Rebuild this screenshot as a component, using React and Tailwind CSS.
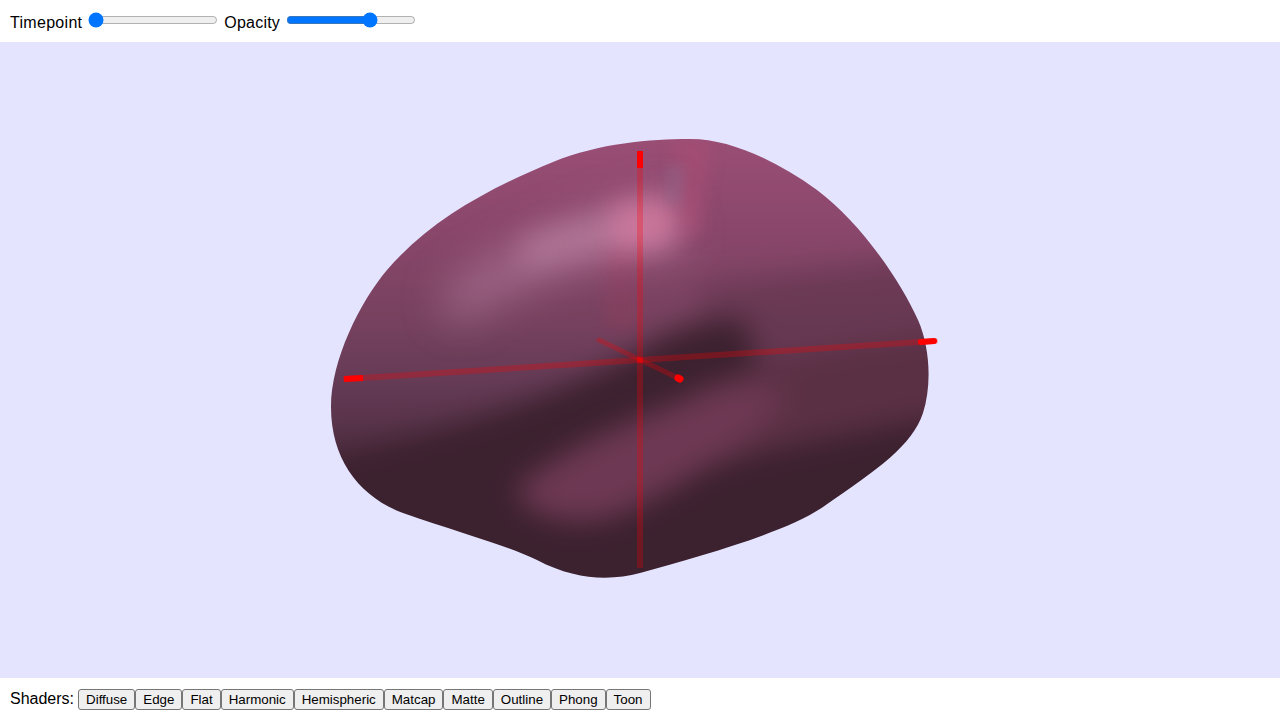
// App.jsx
import React, { useState } from "react";

const SHADERS = ["Diffuse", "Edge", "Flat", "Harmonic", "Hemispheric", "Matcap", "Matte", "Outline", "Phong", "Toon"];

// outline of the mesh, in page coordinates
const OUTLINE =
  "M690 139C730 139 775 160 817 190C860 222 900 280 918 320C930 347 932 385 923 413C912 445 880 468 823 507C785 533 700 556 640 573C610 581 575 580 537 560C500 543 460 533 403 513C360 497 331 460 331 407C331 360 360 302 387 270C430 220 490 188 553 162C600 143 650 139 690 139Z";

const Mesh = () => (
  <svg viewBox="0 42 1280 636" className="block w-full h-full">
    <defs>
      <linearGradient id="base" x1="0" y1="140" x2="0" y2="470" gradientUnits="userSpaceOnUse">
        <stop offset="0" stopColor="#9a4e75" />
        <stop offset="0.3" stopColor="#88466a" />
        <stop offset="0.55" stopColor="#76415e" />
        <stop offset="0.75" stopColor="#633a54" />
        <stop offset="1" stopColor="#4a2a3c" />
      </linearGradient>
      <clipPath id="mesh">
        <path d={OUTLINE} />
      </clipPath>
      <filter id="b6" colorInterpolationFilters="sRGB" x="-50%" y="-50%" width="200%" height="200%"><feGaussianBlur stdDeviation="6" /></filter>
      <filter id="b8" colorInterpolationFilters="sRGB" x="-50%" y="-50%" width="200%" height="200%"><feGaussianBlur stdDeviation="8" /></filter>
      <filter id="b14" colorInterpolationFilters="sRGB" x="-50%" y="-50%" width="200%" height="200%"><feGaussianBlur stdDeviation="14" /></filter>
      <filter id="b22" colorInterpolationFilters="sRGB" x="-50%" y="-50%" width="200%" height="200%"><feGaussianBlur stdDeviation="22" /></filter>
    </defs>

    <rect x="0" y="42" width="1280" height="636" fill="#e4e4ff" />

    <g clipPath="url(#mesh)">
      {/* opaque shading regions, blurred together */}
      <g filter="url(#b14)">
        <rect x="250" y="60" width="780" height="600" fill="url(#base)" />
        <path d="M700 285 L1000 245 L1000 400 L700 400Z" fill="#5f334b" opacity="0.6" />
        <path d="M250 470 C400 445 540 405 640 350 C670 328 710 316 745 320 L760 375 L1030 420 L1030 660 L250 660Z" fill="#3c212f" />
        <path d="M690 392 C770 360 860 342 1000 330 L1000 410 C880 425 790 445 690 470Z" fill="#5a3044" />
        <path d="M515 490 C565 445 650 410 745 380 L790 395 C750 445 690 480 625 512 C580 530 530 520 515 490Z" fill="#6d3853" />
      </g>
      {/* highlights */}
      <path d="M440 295 C510 240 590 212 670 195 L685 250 C600 255 520 275 455 325Z" fill="#b47e9f" opacity="0.7" filter="url(#b22)" />
      <path d="M520 240 C570 222 620 212 660 208 L670 240 C620 244 570 252 525 268Z" fill="#c58cab" opacity="0.5" filter="url(#b14)" />
      <path d="M612 205 L678 195 L678 240 L614 255Z" fill="#d8789e" opacity="0.7" filter="url(#b14)" />
      <path d="M672 140 L712 140 L700 235 L682 235Z" fill="#b04f74" opacity="0.45" filter="url(#b8)" />
      <path d="M665 165 L686 165 L680 205 L665 205Z" fill="#8c6a8e" opacity="0.4" filter="url(#b6)" />
      <path d="M605 250 L640 250 L640 330 L605 330Z" fill="#a83c5c" opacity="0.2" filter="url(#b8)" />
    </g>

    {/* axes */}
    <g stroke="#ff0000" strokeLinecap="round" fill="none">
      <path d="M640 153 L640 568" strokeWidth="6" strokeLinecap="butt" opacity="0.27" />
      <path d="M346 379 L935 341" strokeWidth="6" opacity="0.28" />
      <path d="M599 340 L680 379" strokeWidth="5" opacity="0.28" />
      <path d="M640 151 L640 168" strokeWidth="6" strokeLinecap="butt" />
      <path d="M344 379 L363 378" strokeWidth="6" strokeLinecap="butt" />
      <path d="M921 342 L934 341" strokeWidth="6" />
      <path d="M678 378 L680 379" strokeWidth="7" />
      <circle cx="640" cy="360" r="3" fill="#ff0000" stroke="none" opacity="0.5" />
    </g>
  </svg>
);

const App = () => {
  const [timepoint, setTimepoint] = useState(0);
  const [opacity, setOpacity] = useState(67);

  return (
    <div className="flex flex-col h-screen overflow-hidden bg-white text-black font-['Liberation_Sans',Arial,sans-serif] text-base">
      <div className="flex items-start h-[42px] pl-[10px] gap-[6px] shrink-0">
        <label className="mt-[14px] leading-[18px] tracking-[0.3px]">Timepoint</label>
        <input
          type="range"
          min="0"
          max="100"
          value={timepoint}
          onChange={(e) => setTimepoint(e.target.value)}
          className="w-[130px] h-4 mt-3"
        />
        <label className="mt-[14px] leading-[18px] tracking-[0.2px]">Opacity</label>
        <input
          type="range"
          min="0"
          max="100"
          value={opacity}
          onChange={(e) => setOpacity(e.target.value)}
          className="w-[130px] h-4 mt-3"
        />
      </div>

      <div className="flex-1 min-h-0">
        <Mesh />
      </div>

      <div className="flex items-start h-[42px] pl-[10px] shrink-0">
        <span className="mt-[12px] mr-[4px] leading-[18px]">Shaders:</span>
        {SHADERS.map((name) => (
          <button
            key={name}
            className="mt-[11px] h-[21px] px-[7px] bg-[#efefef] border border-[#767676] rounded-[3px] text-[13.33px] leading-none font-['Liberation_Sans',Arial,sans-serif]"
          >
            {name}
          </button>
        ))}
      </div>
    </div>
  );
};

export default App;
